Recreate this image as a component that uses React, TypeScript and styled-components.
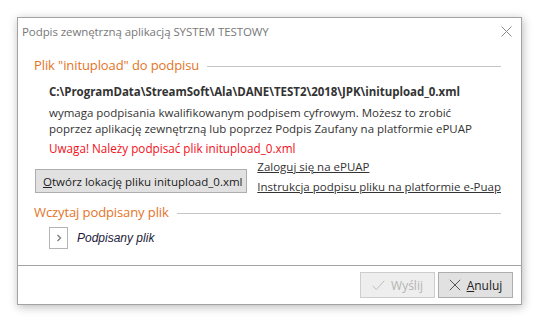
import React from 'react'
import styled, { createGlobalStyle } from 'styled-components'

const font = '"Open Sans", "Noto Sans", "Liberation Sans", sans-serif'

const GlobalStyle = createGlobalStyle`
  html, body {
    margin: 0;
    background: #ffffff;
  }
  body {
    font-family: ${font};
  }
`

const Page = styled.div`
  width: 540px;
  height: 318px;
  padding: 17px 0 0 17px;
  box-sizing: border-box;
`

const Window = styled.div`
  width: 505px;
  height: 288px;
  box-sizing: border-box;
  border: 1px solid #a3a3a3;
  background: #ffffff;
  box-shadow: 1px 2px 9px rgba(0, 0, 0, 0.28);
  display: flex;
  flex-direction: column;
`

const TitleBar = styled.div`
  height: 26px;
  display: flex;
  align-items: center;
  justify-content: space-between;
  padding: 0 9px 0 4px;
  color: #787878;
  font-size: 11.5px;
  letter-spacing: -0.08px;
`

const CloseButton = styled.span`
  display: flex;
  align-items: center;
`

const Content = styled.div`
  flex: 1;
  padding: 5px 20px 0 16px;
  display: flex;
  flex-direction: column;
`

const SectionHeader = styled.div<{ $top?: number }>`
  display: flex;
  align-items: center;
  gap: 8px;
  color: #e4741f;
  font-size: 13px;
  height: 20px;
  margin-top: ${(p) => p.$top || 0}px;
  letter-spacing: -0.1px;

  &::after {
    content: '';
    flex: 1;
    height: 1px;
    background: #c6c6c6;
    margin-top: 2px;
  }
`

const Body = styled.div`
  padding-left: 15px;
  display: flex;
  flex-direction: column;
  font-size: 11.5px;
  color: #333333;
`

const Path = styled.div`
  font-weight: 700;
  margin-top: 9px;
  line-height: 16px;
  letter-spacing: -0.04px;
`

const Description = styled.div`
  margin-top: 5px;
  line-height: 16px;
`

const Warning = styled.div`
  color: #f20f1a;
  font-size: 11.7px;
  margin-top: 3px;
  line-height: 16px;
`

const ActionRow = styled.div`
  display: flex;
  align-items: flex-start;
  gap: 10px;
  margin: 1px 0 0 1px;
  font-size: 11.5px;
  color: #333333;
`

const OpenButton = styled.button`
  margin-top: 12px;
  width: 216px;
  height: 24px;
  box-sizing: border-box;
  background: #e1e1e1;
  border: 1px solid #adadad;
  font-family: ${font};
  font-size: 11.5px;
  color: #222222;
  text-align: left;
  padding: 0 0 0 7px;
  white-space: nowrap;

  u {
    text-decoration-thickness: 1px;
  }
`

const Links = styled.div`
  display: flex;
  flex-direction: column;
`

const Link = styled.a`
  color: #333333;
  text-decoration: underline;
  line-height: 20px;
  white-space: nowrap;
`

const FileRow = styled.div`
  display: flex;
  align-items: center;
  gap: 9px;
  margin-top: 5px;
`

const Expander = styled.span`
  width: 19px;
  height: 22px;
  box-sizing: border-box;
  border: 1px solid #b4b4b4;
  display: flex;
  align-items: center;
  justify-content: center;
`

const FileLabel = styled.span`
  font-family: 'Liberation Sans', Arial, sans-serif;
  font-style: italic;
  font-size: 12px;
  color: #1c1c3a;
`

const Footer = styled.div`
  height: 39px;
  border-top: 1px solid #a3a3a3;
  display: flex;
  justify-content: flex-end;
  align-items: flex-start;
  gap: 3px;
  padding: 6px 8px 0 0;
  box-sizing: border-box;
`

const DialogButton = styled.button<{ $disabled?: boolean }>`
  width: 75px;
  height: 26px;
  box-sizing: border-box;
  display: flex;
  align-items: center;
  justify-content: center;
  gap: 6px;
  font-family: ${font};
  font-size: 12px;
  padding: 0;
  background: ${(p) => (p.$disabled ? '#eeeeee' : '#e1e1e1')};
  border: 1px solid ${(p) => (p.$disabled ? '#cdcdcd' : '#adadad')};
  color: ${(p) => (p.$disabled ? '#b4b4b4' : '#222222')};
`

const App = () => (
  <>
    <GlobalStyle />
    <Page>
      <Window>
        <TitleBar>
          <span>Podpis zewnętrzną aplikacją SYSTEM TESTOWY</span>
          <CloseButton>
            <svg width="11" height="11" viewBox="0 0 11 11">
              <path d="M0.5 0.5 L10.5 10.5 M10.5 0.5 L0.5 10.5" stroke="#8a8a8a" strokeWidth="1" />
            </svg>
          </CloseButton>
        </TitleBar>
        <Content>
          <SectionHeader $top={6}>Plik "initupload" do podpisu</SectionHeader>
          <Body>
            <Path>C:\ProgramData\StreamSoft\Ala\DANE\TEST2\2018\JPK\initupload_0.xml</Path>
            <Description>
              wymaga podpisania kwalifikowanym podpisem cyfrowym. Możesz to zrobić
              <br />
              poprzez aplikację zewnętrzną lub poprzez Podpis Zaufany na platformie ePUAP
            </Description>
            <Warning>Uwaga! Należy podpisać plik initupload_0.xml</Warning>
          </Body>
          <ActionRow>
            <OpenButton>
              <u>O</u>twórz lokację pliku initupload_0.xml
            </OpenButton>
            <Links>
              <Link>Zaloguj się na ePUAP</Link>
              <Link>Instrukcja podpisu pliku na platformie e-Puap</Link>
            </Links>
          </ActionRow>
          <SectionHeader $top={5}>Wczytaj podpisany plik</SectionHeader>
          <Body>
            <FileRow>
              <Expander>
                <svg width="6" height="8" viewBox="0 0 6 8">
                  <path d="M1.5 1 L4.5 4 L1.5 7" stroke="#7a7a7a" strokeWidth="1.3" fill="none" />
                </svg>
              </Expander>
              <FileLabel>Podpisany plik</FileLabel>
            </FileRow>
          </Body>
        </Content>
        <Footer>
          <DialogButton $disabled>
            <svg width="13" height="11" viewBox="0 0 13 11">
              <path d="M0.8 5.8 L4.3 9.6 L12.2 0.8" stroke="#bdbdbd" strokeWidth="1" fill="none" />
            </svg>
            <span>Wyślij</span>
          </DialogButton>
          <DialogButton>
            <svg width="12" height="12" viewBox="0 0 12 12">
              <path d="M0.8 0.8 L11.2 11.2 M11.2 0.8 L0.8 11.2" stroke="#555555" strokeWidth="1" />
            </svg>
            <span>
              <u>A</u>nuluj
            </span>
          </DialogButton>
        </Footer>
      </Window>
    </Page>
  </>
)

export default App
